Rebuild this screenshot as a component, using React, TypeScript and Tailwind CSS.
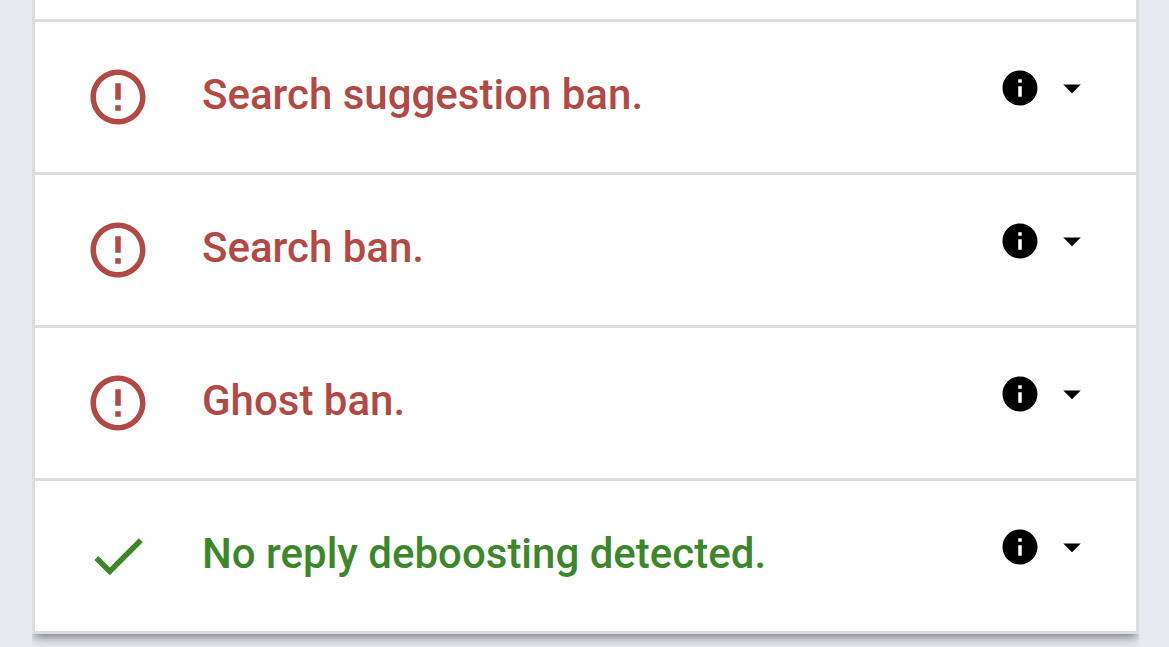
import { MdCheck, MdErrorOutline, MdInfo, MdArrowDropDown } from 'react-icons/md';

const results = [
  { label: 'Search suggestion ban.', banned: true },
  { label: 'Search ban.', banned: true },
  { label: 'Ghost ban.', banned: true },
  { label: 'No reply deboosting detected.', banned: false },
];

export default function App() {
  return (
    <div className="min-h-screen bg-[#e6eaef] pr-[30px] pb-3 pl-8 font-['Roboto',sans-serif]">
      {/* the shadow only shows below the card */}
      <ul className="border-x-3 border-b-3 border-[#dcdddd] bg-white pt-[19px] shadow-[0_5px_10px_-2px_rgba(0,0,0,0.5)] [clip-path:inset(0_0_-13px_0)]">
        {results.map((result) => (
          <li key={result.label} className="flex h-[153px] items-start border-t-3 border-[#dcdddd] pr-[43px] pl-[50px]">
            {result.banned ? (
              <MdErrorOutline size={66} className="mt-[42px] shrink-0 text-[#b34944]" />
            ) : (
              <MdCheck size={66} className="mt-[42px] shrink-0 text-[#3b8729]" />
            )}
            <span
              className={`mt-12 ml-[51px] flex-1 text-[42px] leading-[50px] font-medium ${
                result.banned ? 'text-[#b34944]' : 'text-[#3b8729]'
              }`}
            >
              {result.label}
            </span>
            <button type="button" aria-label={`About: ${result.label}`} className="mt-[45px] flex items-center text-black">
              <MdInfo size={42} />
              <MdArrowDropDown size={42} className="ml-[10px]" />
            </button>
          </li>
        ))}
      </ul>
    </div>
  );
}
